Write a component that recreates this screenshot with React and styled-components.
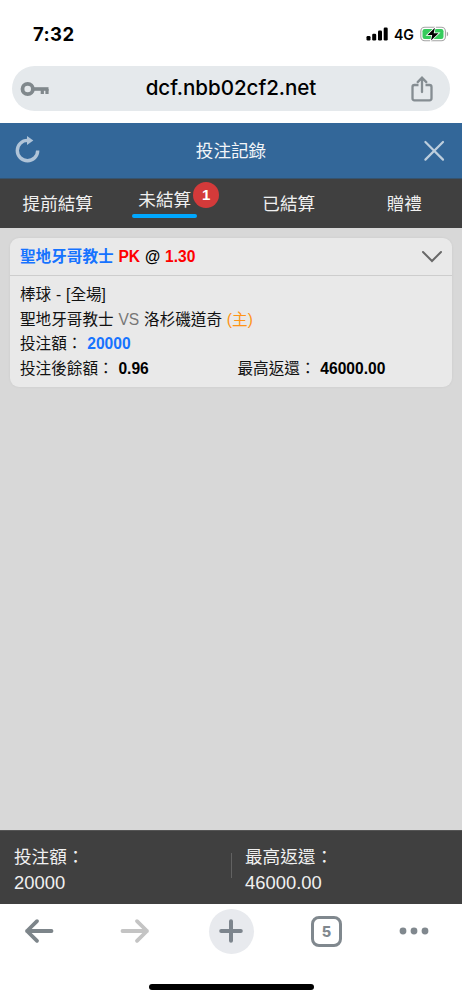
import React, { useState } from 'react';
import styled, { createGlobalStyle } from 'styled-components';

const GlobalStyle = createGlobalStyle`
  * {
    box-sizing: border-box;
  }

  body {
    margin: 0;
    background: #fff;
  }
`;

const Screen = styled.div`
  display: flex;
  flex-direction: column;
  width: 100%;
  max-width: 462px;
  height: 1000px;
  overflow: hidden;
  background: #fff;
  font-family: "Liberation Sans", "Noto Sans CJK TC", sans-serif;
  color: #111;

  svg {
    display: block;
    flex: none;
  }
`;

const StatusBar = styled.div`
  display: flex;
  justify-content: space-between;
  align-items: center;
  height: 66px;
  padding: 2px 13px 0 33px;
  font-family: Inter, sans-serif;
  color: #000;
`;

const Clock = styled.span`
  font-size: 18.5px;
  font-weight: 700;
  letter-spacing: 0.4px;
`;

const StatusIcons = styled.div`
  display: flex;
  align-items: center;
`;

const Network = styled.span`
  margin: 0 6px;
  font-size: 14.2px;
  font-weight: 600;
`;

const AddressBar = styled.div`
  display: flex;
  justify-content: space-between;
  align-items: center;
  height: 45px;
  margin: 0 12px 12px;
  padding: 0 17px 0 8px;
  border-radius: 23px;
  background: #e5e9ec;
`;

const Url = styled.span`
  padding: 0 0 2px 1px;
  font-family: Inter, sans-serif;
  font-size: 20.6px;
  font-weight: 550;
  letter-spacing: -0.05px;
  color: #000;
`;

const Header = styled.header`
  display: flex;
  justify-content: space-between;
  align-items: center;
  height: 56px;
  padding: 0 17px 0 14px;
  border-bottom: 1px solid #35536f;
  background: #336799;
`;

const Title = styled.h1`
  margin: 0;
  padding: 0 1px 2px 0;
  font-size: 17.6px;
  font-weight: 400;
  color: #f2f5f8;
`;

const Tabs = styled.nav`
  display: grid;
  grid-template-columns: repeat(4, 1fr);
  height: 49px;
  background: #404040;
`;

const Tab = styled.button`
  display: flex;
  justify-content: center;
  align-items: center;
  padding: ${({ $active }) => ($active ? '0 17px 0 0' : '1px 0 0')};
  border: 0;
  background: none;
  font-family: inherit;
  font-size: 17.6px;
  color: #f0f0f0;
`;

const TabLabel = styled.span`
  position: relative;
  padding: ${({ $active }) => ($active ? '0 6px 3px' : '0')};
  line-height: 30px;
  border-bottom: ${({ $active }) => ($active ? '4px solid transparent' : '0')};

  &::after {
    content: '';
    display: ${({ $active }) => ($active ? 'block' : 'none')};
    position: absolute;
    left: 0;
    right: 0;
    bottom: 0;
    height: 4px;
    border-radius: 2px;
    background: #00a8ff;
  }
`;

const Badge = styled.span`
  position: absolute;
  top: -3px;
  right: -22px;
  width: 26px;
  height: 26px;
  border-radius: 50%;
  background: #d43a3a;
  font-size: 15px;
  font-weight: 700;
  line-height: 25px;
  text-align: center;
  color: #fff;
`;

const Main = styled.main`
  flex: 1;
  padding: 10px;
  background: #d8d8d8;
`;

const Card = styled.section`
  height: 149px;
  border-radius: 9px;
  background: #e9e9e9;
  box-shadow: 0 0 3px rgba(0, 0, 0, 0.06);
  font-size: 15.6px;
  word-spacing: 0.5px;
`;

const CardHead = styled.div`
  display: flex;
  justify-content: space-between;
  align-items: center;
  height: 38px;
  padding: 0 9px 0 10px;
  border-bottom: 1px solid #cdcdcd;
  font-weight: 700;
  color: #000;
`;

const Selection = styled.span`
  padding-bottom: 3px;
`;

const CardBody = styled.div`
  padding: 6px 10px;
`;

const Line = styled.div`
  display: grid;
  grid-template-columns: ${({ $split }) => ($split ? '217.5px 1fr' : '1fr')};
  height: 24.6px;
  line-height: 25px;
  white-space: nowrap;
`;

const Tint = styled.span`
  color: ${({ $color }) => $color};
`;

const Amount = styled.b`
  color: ${({ $color }) => $color || '#000'};
`;

const Totals = styled.footer`
  display: grid;
  grid-template-columns: 1fr 1fr;
  align-items: center;
  height: 74px;
  border-top: 1px solid #555;
  background: #404040;
  color: #f0f0f0;
`;

const Total = styled.div`
  padding: 4px 0 0 14px;
  font-size: 17.6px;
  line-height: 25px;
`;

const TotalValue = styled.div`
  font-size: 18.4px;
`;

const SecondTotal = styled(Total)`
  background: linear-gradient(#626262, #626262) 0 12px / 1px 25px no-repeat;
`;

const Toolbar = styled.div`
  display: grid;
  grid-template-columns: 78px 114px 78px 113px 61px;
  justify-items: center;
  align-items: center;
  height: 54px;
`;

const NewTab = styled.div`
  display: flex;
  justify-content: center;
  align-items: center;
  width: 45px;
  height: 45px;
  border-radius: 50%;
  background: #e8eaee;
`;

const TabCount = styled.div`
  width: 31px;
  height: 31px;
  border: 3px solid #80888e;
  border-radius: 8px;
  font-family: Inter, sans-serif;
  font-size: 14.5px;
  font-weight: 800;
  line-height: 26px;
  text-align: center;
  color: #80888e;
`;

const HomeIndicator = styled.div`
  width: 165px;
  height: 6px;
  margin: 26px auto 10px;
  border-radius: 3px;
  background: #000;
`;

const SignalIcon = () => (
  <svg width="22" height="14" viewBox="0 0 22 14">
    <rect x="0.5" y="9" width="4" height="4.5" rx="1.2" />
    <rect x="6.2" y="6.7" width="4" height="6.8" rx="1.2" />
    <rect x="12" y="3.5" width="4" height="10" rx="1.2" />
    <rect x="17.7" y="0.5" width="4" height="13" rx="1.2" />
  </svg>
);

const BatteryIcon = () => (
  <svg width="29" height="16" viewBox="0 0 29 16">
    <rect x="0.8" y="1.3" width="24.6" height="13.4" rx="4" fill="none" stroke="#a4a4a4" strokeWidth="1.1" />
    <path d="M26.8 5.8c1.8.5 1.8 4 0 4.5z" fill="#a4a4a4" />
    <rect x="2.5" y="3" width="21" height="10" rx="2.2" fill="#35cb5c" />
    <path
      d="M14.9 1.8 7.5 9h4.7L11 14.4l7.5-7.2h-4.8z"
      fill="#000"
      stroke="#fff"
      strokeWidth="1.6"
      paintOrder="stroke"
    />
  </svg>
);

const KeyIcon = () => (
  <svg width="30" height="18" viewBox="0 0 30 18" fill="none" stroke="#80888c">
    <circle cx="7.7" cy="9" r="5.2" strokeWidth="3.8" />
    <path d="M13.5 9H28.5" strokeWidth="3.6" />
    <path d="M22.3 9v5M27 9v5" strokeWidth="3.2" />
  </svg>
);

const ShareIcon = () => (
  <svg width="22" height="26" viewBox="0 0 22 26" fill="none" stroke="#858d92" strokeWidth="2.3">
    <path d="M7.5 9H3.4Q1.5 9 1.5 11v11.3q0 2 2 2h15q2 0 2-2V11q0-2-2-2h-4" />
    <path d="M11 16V2M6.7 6.1 11 1.7l4.3 4.4" strokeLinecap="round" />
  </svg>
);

const RefreshIcon = () => (
  <svg width="26" height="30" viewBox="0 0 26 30">
    <path d="M13.5 4.4A10.2 10.2 0 1 0 23.7 14.6" fill="none" stroke="#b0c4d8" strokeWidth="3.4" />
    <path d="M13 0v9l6.3-4.5z" fill="#b0c4d8" />
  </svg>
);

const CloseIcon = () => (
  <svg width="22" height="22" viewBox="0 0 22 22" fill="none" stroke="#bdcedd" strokeWidth="2.2">
    <path d="M2.4 2 20 19.6M20 2 2.4 19.6" strokeLinecap="round" />
  </svg>
);

const ChevronIcon = () => (
  <svg width="22" height="13" viewBox="0 0 22 13" fill="none" stroke="#686868" strokeWidth="2">
    <path d="M2 2 11 11 20 2" strokeLinecap="round" />
  </svg>
);

const ArrowIcon = ({ color, forward }) => (
  <svg width="30" height="26" viewBox="0 0 30 26" fill="none" stroke={color} strokeWidth="3.8">
    <path
      d={forward ? 'M2.5 13H27M17 3.2 27 13 17 22.8' : 'M27.5 13H3M13 3.2 3 13 13 22.8'}
      strokeLinecap="round"
      strokeLinejoin="round"
    />
  </svg>
);

const PlusIcon = () => (
  <svg width="26" height="26" viewBox="0 0 26 26" stroke="#7d858d" strokeWidth="4" strokeLinecap="round">
    <path d="M13 3.2v19.6M3.2 13h19.6" />
  </svg>
);

const MoreIcon = () => (
  <svg width="30" height="8" viewBox="0 0 30 8" fill="#80888e">
    <circle cx="4" cy="4" r="3.4" />
    <circle cx="15" cy="4" r="3.4" />
    <circle cx="26" cy="4" r="3.4" />
  </svg>
);

const tabs = [
  { id: 'early', label: '提前結算' },
  { id: 'open', label: '未結算', count: 1 },
  { id: 'settled', label: '已結算' },
  { id: 'gift', label: '贈禮' },
];

export default () => {
  const [activeTab, setActiveTab] = useState('open');

  return (
    <Screen>
      <GlobalStyle />
      <StatusBar>
        <Clock>7:32</Clock>
        <StatusIcons>
          <SignalIcon />
          <Network>4G</Network>
          <BatteryIcon />
        </StatusIcons>
      </StatusBar>
      <AddressBar>
        <KeyIcon />
        <Url>dcf.nbb02cf2.net</Url>
        <ShareIcon />
      </AddressBar>
      <Header>
        <RefreshIcon />
        <Title>投注記錄</Title>
        <CloseIcon />
      </Header>
      <Tabs>
        {tabs.map(({ id, label, count }) => (
          <Tab key={id} $active={id === activeTab} onClick={() => setActiveTab(id)}>
            <TabLabel $active={id === activeTab}>
              {label}
              {count ? <Badge>{count}</Badge> : null}
            </TabLabel>
          </Tab>
        ))}
      </Tabs>
      <Main>
        <Card>
          <CardHead>
            <Selection>
              <Tint $color="#1673ff">聖地牙哥教士</Tint> <Tint $color="#f00">PK</Tint> @ <Tint $color="#f00">1.30</Tint>
            </Selection>
            <ChevronIcon />
          </CardHead>
          <CardBody>
            <Line>棒球 - [全場]</Line>
            <Line>
              <span>
                聖地牙哥教士 <Tint $color="#777">VS</Tint> 洛杉磯道奇 <Tint $color="#ff9416">(主)</Tint>
              </span>
            </Line>
            <Line>
              <span>投注額： <Amount $color="#1673ff">20000</Amount></span>
            </Line>
            <Line $split>
              <span>投注後餘額： <Amount>0.96</Amount></span>
              <span>最高返還： <Amount>46000.00</Amount></span>
            </Line>
          </CardBody>
        </Card>
      </Main>
      <Totals>
        <Total>
          投注額：
          <TotalValue>20000</TotalValue>
        </Total>
        <SecondTotal>
          最高返還：
          <TotalValue>46000.00</TotalValue>
        </SecondTotal>
      </Totals>
      <Toolbar>
        <ArrowIcon color="#7d858a" />
        <ArrowIcon color="#c4c4c4" forward />
        <NewTab>
          <PlusIcon />
        </NewTab>
        <TabCount>5</TabCount>
        <MoreIcon />
      </Toolbar>
      <HomeIndicator />
    </Screen>
  );
};
